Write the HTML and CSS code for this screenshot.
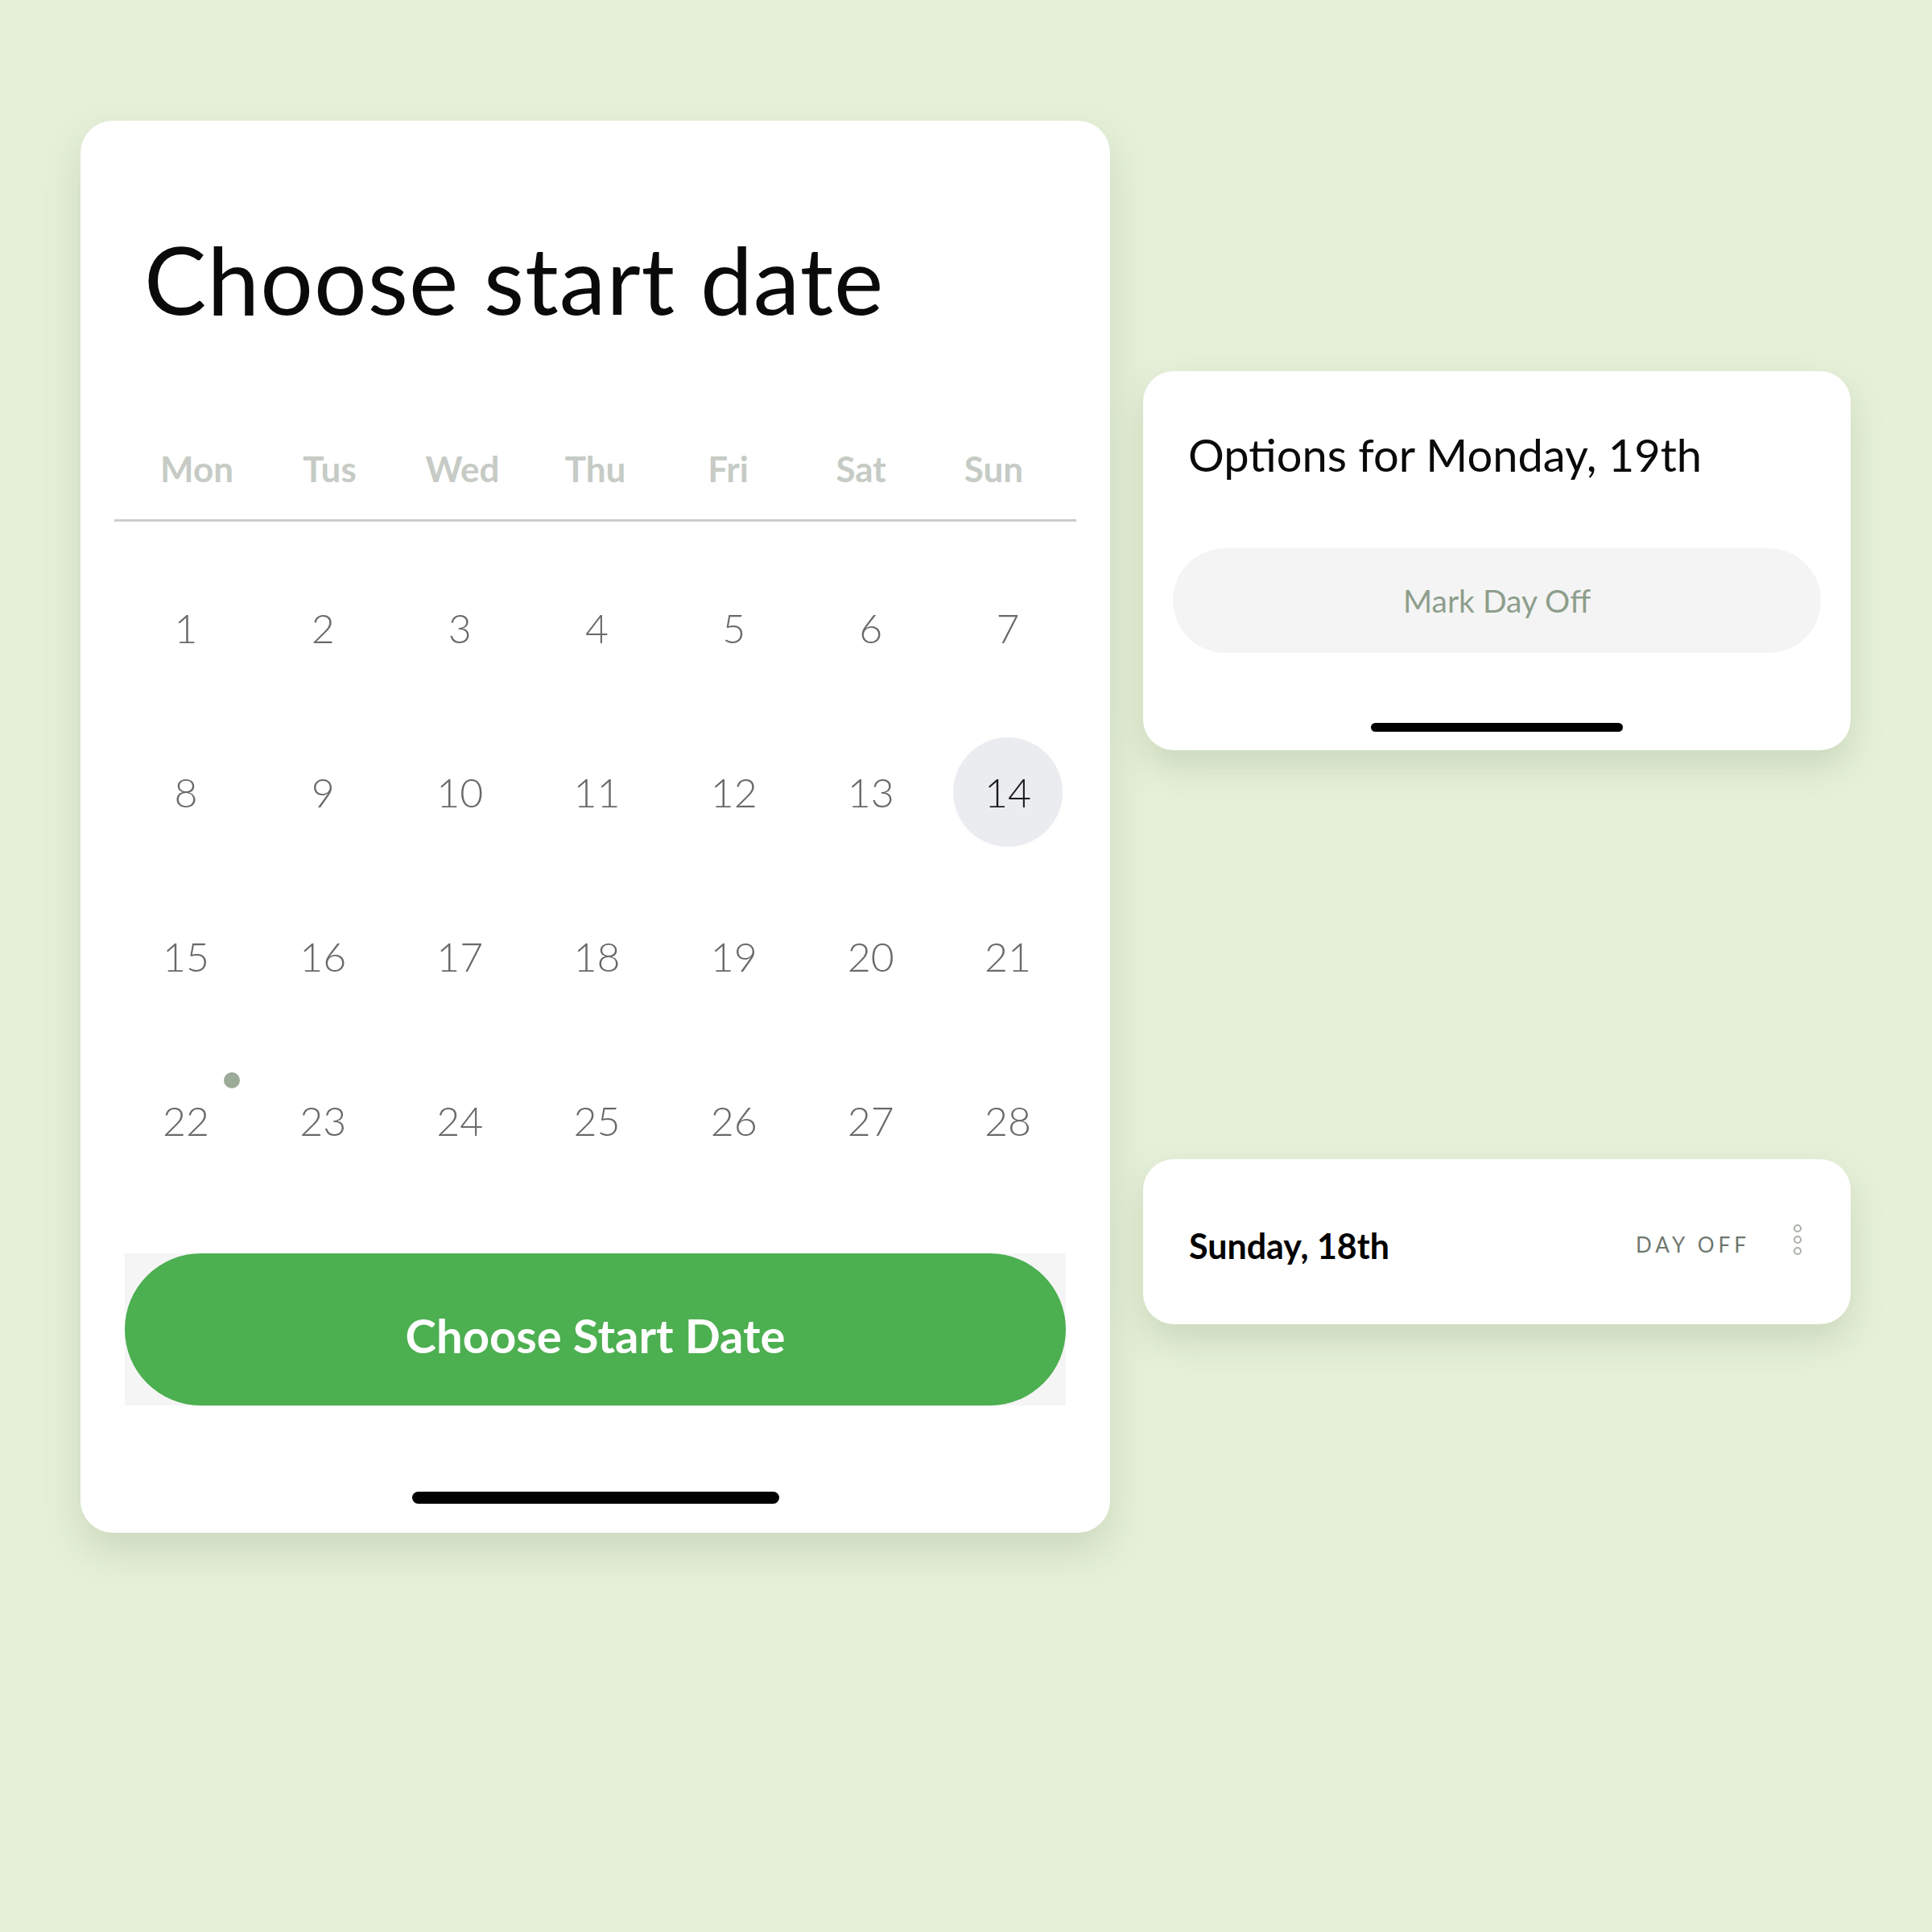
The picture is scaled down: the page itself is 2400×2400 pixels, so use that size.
FILE: index.html
```html
<!DOCTYPE html>
<html>
<head>
	<meta charset="utf-8">
	<title>Choose start date</title>
	<link rel="stylesheet" href="styles.css">
</head>
<body>
<div class="page">

	<div class="picker">
		<h1>Choose start date</h1>

		<div class="week-head">
			<ol class="weekdays">
				<li>Mon</li>
				<li>Tus</li>
				<li>Wed</li>
				<li>Thu</li>
				<li>Fri</li>
				<li>Sat</li>
				<li>Sun</li>
			</ol>
		</div>

		<ol class="days">
			<li>1</li><li>2</li><li>3</li><li>4</li><li>5</li><li>6</li><li>7</li>
			<li>8</li><li>9</li><li>10</li><li>11</li><li>12</li><li>13</li><li class="selected"><span>14</span></li>
			<li>15</li><li>16</li><li>17</li><li>18</li><li>19</li><li>20</li><li>21</li>
			<li class="marked">22</li><li>23</li><li>24</li><li>25</li><li>26</li><li>27</li><li>28</li>
		</ol>

		<div class="action">
			<button class="primary">Choose Start Date</button>
		</div>

		<div class="home-bar"></div>
	</div>

	<div class="side">
		<div class="sheet options">
			<h2>Options for Monday, 19th</h2>
			<button class="secondary">Mark Day Off</button>
			<div class="home-bar small"></div>
		</div>

		<div class="sheet entry">
			<strong>Sunday, 18th</strong>
			<span class="status">DAY OFF</span>
			<span class="more"><i></i><i></i><i></i></span>
		</div>
	</div>

</div>
</body>
</html>
```

FILE: styles.css
```css
/* Reset */

* { margin: 0; padding: 0; box-sizing: border-box; }

html, body {
	background-color: #e6f0d9;
}

body {
	font-family: Lato, "Open Sans", sans-serif;
	width: 2400px;
	height: 2400px;
}

button {
	font-family: inherit;
	border: 0;
	cursor: pointer;
}


/* Page */

.page {
	display: flex;
	align-items: flex-start;
	gap: 41px;
	padding: 150px 0 0 100px;
}

.home-bar {
	align-self: center;
	width: 456px;
	height: 15px;
	border-radius: 8px;
	background-color: #000;
	margin-top: 107px;
}


/* Date picker */

.picker {
	display: flex;
	flex-direction: column;
	width: 1279px;
	height: 1754px;
	padding: 0 42px;
	background-color: white;
	border-radius: 40px;
	box-shadow: 0 22px 50px rgba(70, 100, 50, 0.17);
}

.picker h1 {
	margin-top: 117px;
	height: 160px;
	line-height: 160px;
	padding-left: 37px;
	font-size: 116px;
	font-weight: 400;
	letter-spacing: 1px;
	color: #0a0a0a;
}

.week-head {
	margin-top: 125px;
	padding: 0 20px 33px;
	border-bottom: solid 3px #c9cec8;
}

.weekdays {
	list-style: none;
	display: grid;
	grid-template-columns: repeat(7, 1fr);
	height: 60px;
	line-height: 60px;
	text-align: center;
	font-size: 44px;
	font-weight: 700;
	color: #c6cbc5;
}

.days {
	list-style: none;
	display: grid;
	grid-template-columns: repeat(7, 1fr);
	grid-auto-rows: 204px;
	margin: 30px 0 0 4px;
	font-size: 50px;
	font-weight: 300;
	color: #676a67;
}

.days li {
	position: relative;
	display: flex;
	align-items: center;
	justify-content: center;
}

.days .selected span {
	display: flex;
	align-items: center;
	justify-content: center;
	width: 136px;
	height: 136px;
	border-radius: 50%;
	background-color: #ebecf0;
	color: #1b1b1b;
}

/* small dot over a day with something on it */
.days .marked::before {
	content: "";
	position: absolute;
	left: 50%;
	top: 50%;
	width: 20px;
	height: 20px;
	margin: -60px 0 0 47px;
	border-radius: 50%;
	background-color: #9bab98;
}

.action {
	margin: 63px 13px 0;
	height: 189px;
	background-color: #f5f5f5;
}

.primary {
	width: 100%;
	height: 100%;
	padding-top: 14px;
	border-radius: 95px;
	background-color: #4caf50;
	color: white;
	font-size: 58px;
	font-weight: 700;
}


/* Side sheets */

.side {
	display: flex;
	flex-direction: column;
	gap: 508px;
	width: 879px;
	padding-top: 311px;
}

.sheet {
	background-color: white;
	border-radius: 38px;
	box-shadow: 0 20px 44px rgba(70, 100, 50, 0.17);
}

.options {
	display: flex;
	flex-direction: column;
	height: 471px;
	padding: 0 37px;
}

.options h2 {
	margin-top: 64px;
	height: 80px;
	line-height: 80px;
	padding-left: 19px;
	font-size: 56px;
	font-weight: 400;
	color: #0a0a0a;
}

.secondary {
	margin-top: 76px;
	height: 130px;
	border-radius: 65px;
	background-color: #f4f4f4;
	color: #8e9e8c;
	font-size: 39px;
	font-weight: 400;
}

.home-bar.small {
	width: 313px;
	height: 11px;
	border-radius: 6px;
	margin-top: 87px;
}

.entry {
	display: flex;
	align-items: center;
	height: 205px;
	padding: 10px 61px 0 57px;
}

.entry strong {
	flex: 1;
	font-size: 43px;
	font-weight: 700;
	color: #000;
}

.status {
	margin-right: 54px;
	margin-top: -4px;
	font-size: 26px;
	letter-spacing: 5px;
	color: #6f776e;
}

.more {
	display: flex;
	flex-direction: column;
	gap: 4px;
	margin-top: -16px;
}

.more i {
	width: 10px;
	height: 10px;
	border: solid 2px #a9b1a7;
	border-radius: 50%;
}
```
